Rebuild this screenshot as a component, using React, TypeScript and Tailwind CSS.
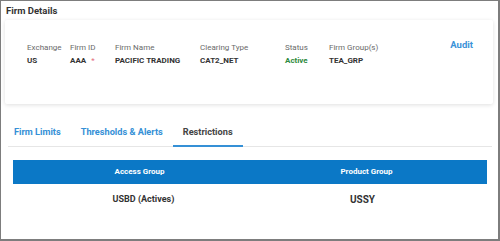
import React from "react";

const font = { fontFamily: "Roboto, 'Noto Sans', Arial, sans-serif" };

// Firm summary fields
const fields = [
	{ label: "Exchange", value: "US", width: "w-[43px]" },
	{ label: "Firm ID", value: "AAA", width: "w-[45px]", required: true },
	{ label: "Firm Name", value: "PACIFIC TRADING", width: "w-[85px]" },
	{ label: "Clearing Type", value: "CAT2_NET", width: "w-[85px]" },
	{ label: "Status", value: "Active", width: "w-[44px]", status: true },
	{ label: "Firm Group(s)", value: "TEA_GRP", width: "w-[90px]" },
];

export default function App() {
	return (
		<div
			className="w-[500px] h-[241px] box-border bg-white border-l border-t border-r-2 border-b-2 border-[#7d7d7d] overflow-hidden"
			style={font}
		>
			{/* Title */}
			<div className="pl-[5px] pt-[3px] text-[9.5px] leading-[13px] font-bold text-[#333]">Firm Details</div>

			{/* Firm card */}
			<div className="ml-[4px] mt-[3px] w-[488px] h-[84px] bg-white rounded-[2px] shadow-[0_1px_4px_rgba(0,0,0,0.13)] flex items-start pt-[23px] pl-[22px] pr-[20px]">
				<div className="flex">
					{fields.map((f) => (
						<div key={f.label} className={f.width}>
							<div className="text-[8px] leading-[10px] text-[#6a6a6a]">{f.label}</div>
							<div
								className={
									"mt-[3px] text-[8px] leading-[10px] font-bold " +
									(f.status ? "text-[#2e8a3e]" : "text-[#333]")
								}
							>
								{f.value}
								{f.required && <span className="ml-[5px] text-[#e36c7c] font-normal">*</span>}
							</div>
						</div>
					))}
				</div>
				<div className="ml-auto mt-[-4px] text-[9.5px] leading-[11px] font-bold text-[#3a92d8]">Audit</div>
			</div>

			{/* Tabs */}
			<div className="mt-[16px] ml-[7px] mr-[6px] flex border-b border-[#e6e6e6]">
				<div className="pl-[6px] pr-[10px] pt-[6px] pb-[8px] text-[9.2px] leading-[12px] font-bold text-[#3590d6]">
					Firm Limits
				</div>
				<div className="px-[10px] pt-[6px] pb-[8px] text-[9.2px] leading-[12px] font-bold text-[#3590d6]">
					Thresholds &amp; Alerts
				</div>
				<div className="px-[10px] pt-[6px] pb-[6px] -mb-px text-[9.2px] leading-[12px] font-bold text-[#444] border-b-2 border-[#3590d6]">
					Restrictions
				</div>
			</div>

			{/* Restrictions table */}
			<div className="ml-[12px] mt-[13px] w-[474px]">
				<div className="h-[24px] bg-[#0b78c6] grid grid-cols-[227px_227px] pl-[13px] items-center text-[8px] font-bold text-white">
					<div className="text-center">Access Group</div>
					<div className="text-center">Product Group</div>
				</div>
				<div className="h-[32px] grid grid-cols-[227px_227px] pl-[13px] items-center font-bold text-[#333]">
					<div className="text-center pl-[8px] text-[9px]">USBD (Actives)</div>
					<div className="text-center pr-[8px] text-[10px] mt-[-2px]">USSY</div>
				</div>
			</div>
		</div>
	);
}
